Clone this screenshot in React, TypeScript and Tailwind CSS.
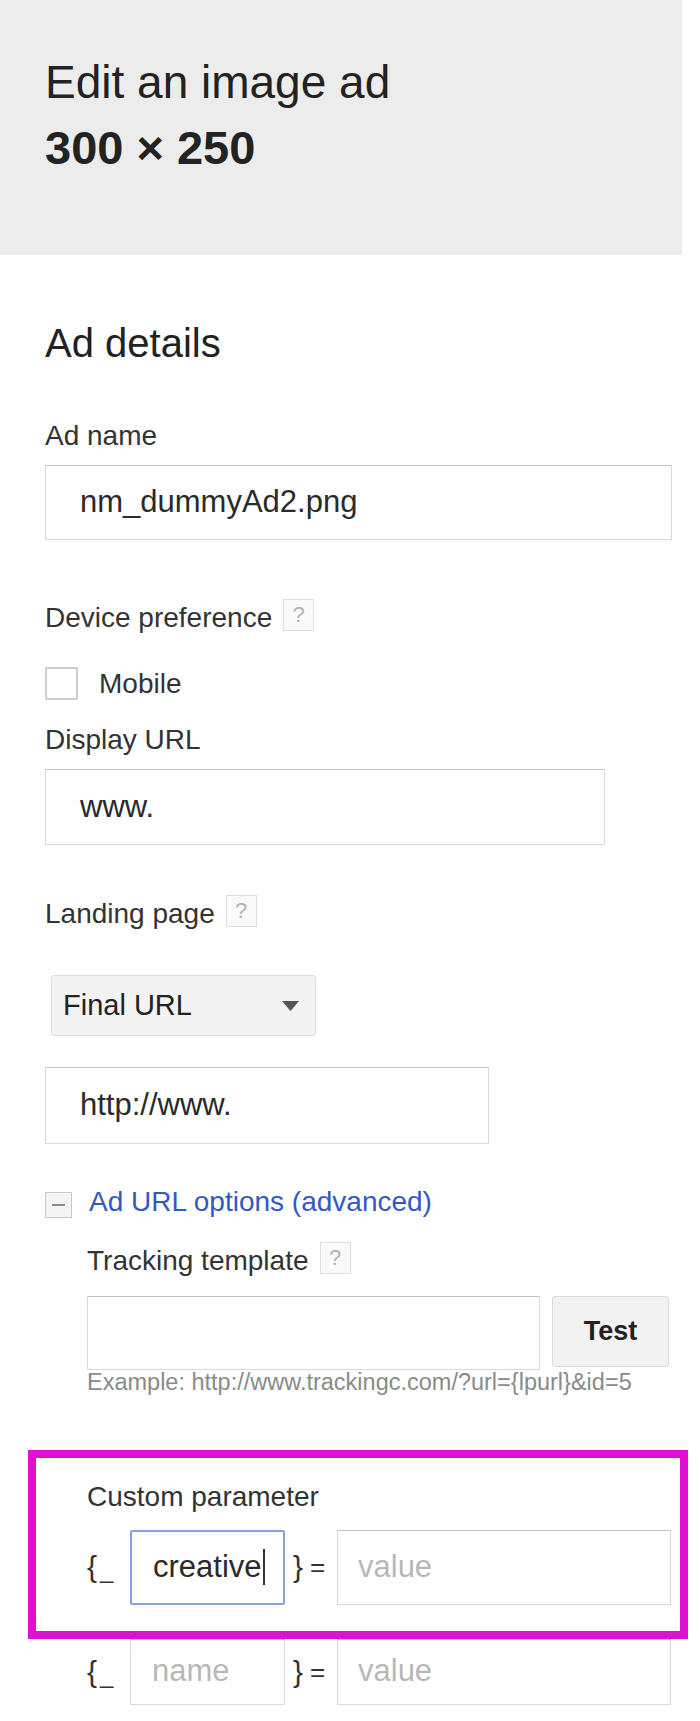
import React from 'react';

const HelpBox: React.FC = () => (
  <div className="w-[31px] h-[32px] border border-[#dedede] bg-[#fafafa] flex items-center justify-center text-[22px] leading-none text-[#b3b3b3]">
    ?
  </div>
);

const Label: React.FC<{ text: string; help?: boolean }> = ({ text, help }) => (
  <div className="flex items-start gap-[11px]">
    <span className="mt-[5px] text-[28px] leading-[28px] text-[#333]">{text}</span>
    {help && <HelpBox />}
  </div>
);

const Field: React.FC<{ className?: string; text?: string; placeholder?: string }> = ({
  className = '',
  text,
  placeholder,
}) => (
  <div
    className={`flex items-center bg-white border border-[#d9d9d9] border-t-[#c4c4c4] text-[31px] ${className}`}
  >
    {text ? (
      <span className="text-[#2a2a2a]">{text}</span>
    ) : (
      <span className="text-[#b8b8b8]">{placeholder}</span>
    )}
  </div>
);

const ParamRow: React.FC<{ name?: string; rowClass: string; focused?: boolean }> = ({
  name,
  rowClass,
  focused,
}) => (
  <div className="flex items-center">
    <span className="w-[43px] flex items-end text-[30px] leading-none text-[#333]">
      {'{'}
      <span className="ml-[3px] text-[24px]">_</span>
    </span>
    {focused ? (
      <div
        className={`w-[155px] flex items-center pl-[21px] bg-white border-2 border-[#86a2da] rounded-[2px] text-[31px] text-[#2a2a2a] ${rowClass}`}
      >
        {name}
        <span className="ml-[1px] w-[2px] h-[36px] bg-[#333]" />
      </div>
    ) : (
      <Field className={`w-[155px] pl-[21px] ${rowClass}`} placeholder="name" />
    )}
    <span className="w-[52px] pl-[8px] flex items-center gap-[7px] text-[30px] leading-none text-[#333]">
      <span>{'}'}</span>
      <span className="text-[26px]">=</span>
    </span>
    <Field className={`w-[334px] pl-[20px] ${rowClass}`} placeholder="value" />
  </div>
);

export default function App() {
  return (
    <div className="w-[700px] min-h-[1721px] bg-white font-['Liberation_Sans',Arial,sans-serif] text-[#222]">
      <header className="w-[682px] h-[255px] bg-[#ececec] pt-[49px] pl-[45px]">
        <h1 className="text-[46px] leading-[66px] font-normal">Edit an image ad</h1>
        <div className="text-[47px] leading-[66px] font-bold">300 × 250</div>
      </header>

      <main className="pl-[45px]">
        <h2 className="mt-[68px] text-[40px] leading-[40px]">Ad details</h2>

        <div className="mt-[59px] text-[28px] leading-[28px] text-[#333]">Ad name</div>
        <Field className="mt-[15px] w-[627px] h-[75px] pl-[34px]" text="nm_dummyAd2.png" />

        <div className="mt-[59px]">
          <Label text="Device preference" help />
        </div>
        <div className="mt-[35px] flex items-center gap-[21px]">
          <div className="w-[33px] h-[33px] border-2 border-[#cfcfcf] rounded-[1px] bg-white" />
          <span className="text-[28px] leading-[28px] text-[#333]">Mobile</span>
        </div>

        <div className="mt-[26px] text-[28px] leading-[28px] text-[#333]">Display URL</div>
        <Field className="mt-[15px] w-[560px] h-[76px] pl-[34px]" text="www." />

        <div className="mt-[50px]">
          <Label text="Landing page" help />
        </div>

        <div className="mt-[47px] ml-[6px] w-[265px] h-[61px] flex items-center justify-between pl-[11px] pr-[16px] bg-[#f3f3f3] border border-[#dcdcdc] rounded-[3px]">
          <span className="text-[29px] text-[#222]">Final URL</span>
          <svg width="17" height="10" viewBox="0 0 17 10">
            <path d="M0 0 L17 0 L8.5 10 Z" fill="#555" />
          </svg>
        </div>

        <Field className="mt-[31px] w-[444px] h-[77px] pl-[34px]" text="http://www." />

        <div className="mt-[44px] flex items-start gap-[17px]">
          <div className="mt-[4px] w-[27px] h-[26px] border border-[#c8c8c8] bg-[#f4f4f4] flex items-center justify-center">
            <div className="w-[13px] h-[2px] bg-[#8c8c8c]" />
          </div>
          <span className="text-[28px] leading-[28px] text-[#3459c4]">Ad URL options (advanced)</span>
        </div>

        <div className="pl-[42px]">
          <div className="mt-[24px]">
            <Label text="Tracking template" help />
          </div>
          <div className="mt-[21px] flex items-start gap-[12px]">
            <Field className="w-[453px] h-[74px]" />
            <button className="w-[117px] h-[71px] bg-[#f2f2f2] border border-[#dadada] rounded-[3px] text-[27px] font-bold text-[#222]">
              Test
            </button>
          </div>
          <div className="mt-[1px] text-[23.5px] leading-[23.5px] text-[#8a8a8a]">
            Example: http://www.trackingc.com/?url={'{lpurl}'}&amp;id=5
          </div>
        </div>
      </main>

      <section className="mt-[55px] ml-[28px] w-[660px] border-[8px] border-[#e10fd4] pl-[51px] pt-[25px] pb-[26px]">
        <div className="text-[28px] leading-[28px] text-[#333]">Custom parameter</div>
        <div className="mt-[19px]">
          <ParamRow name="creative" rowClass="h-[75px]" focused />
        </div>
      </section>

      <div className="ml-[87px]">
        <ParamRow rowClass="h-[66px]" />
      </div>
    </div>
  );
}
